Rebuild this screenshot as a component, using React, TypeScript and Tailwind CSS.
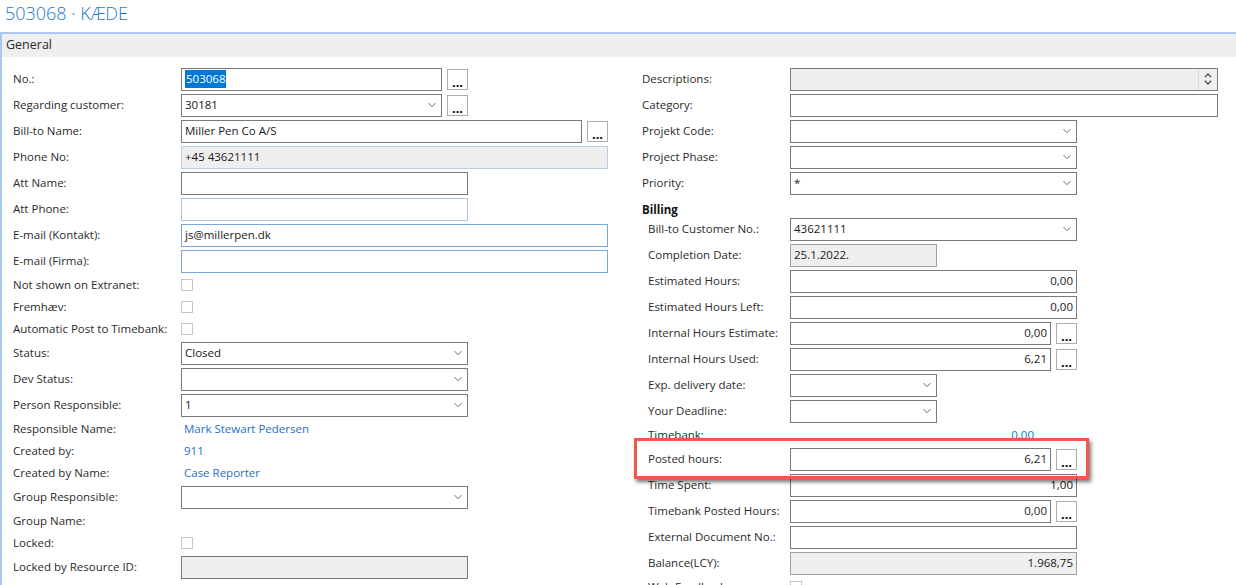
import type { ReactNode } from "react";

const font = { fontFamily: '"Open Sans", "Noto Sans", sans-serif' };

function Chevron() {
  return (
    <svg width="8" height="5" viewBox="0 0 8 5" className="absolute right-[5px] top-1/2 -translate-y-1/2">
      <polyline points="0.5,0.6 4,4.2 7.5,0.6" fill="none" stroke="#6a6a6a" strokeWidth="1" />
    </svg>
  );
}

function Dots() {
  return (
    <div className="ml-[5px] flex h-[21px] w-[21px] shrink-0 items-end justify-center border border-[#adadad] bg-white pb-[2px] text-[13px] font-bold leading-[10px] text-black">
      ...
    </div>
  );
}

type FieldProps = {
  w: string;
  value?: ReactNode;
  tone?: "normal" | "gray" | "grayBlue" | "blue" | "lightBlue" | "grayLight";
  select?: boolean;
  right?: boolean;
  dots?: boolean;
};

function Field({ w, value, tone = "normal", select, right, dots }: FieldProps) {
  const toneClass = {
    normal: "border-[#7a7a7a] bg-white",
    gray: "border-[#7a7a7a] bg-[#efefef]",
    grayLight: "border-[#a0a0a0] bg-[#efefef]",
    grayBlue: "border-[#b7cfe6] bg-[#efefef]",
    blue: "border-[#7aa7d3] bg-white",
    lightBlue: "border-[#aac8e6] bg-white",
  }[tone];
  return (
    <div className="flex items-center">
      <div className={`relative flex h-[23px] items-center border px-[3px] text-[11.5px] text-[#1a1a1a] ${toneClass} ${w} ${right ? "justify-end" : ""}`}>
        {value}
        {select && <Chevron />}
      </div>
      {dots && <Dots />}
    </div>
  );
}

function Check() {
  return <div className="h-[12px] w-[12px] border border-[#c6c6c6] bg-white" />;
}

function Row({ label, lw, h = "h-[26px]", children }: { label: string; lw: string; h?: string; children?: ReactNode }) {
  return (
    <div className={`flex items-center ${h}`}>
      <div className={`${lw} shrink-0 text-[11.5px] text-[#2b2b2b]`}>{label}</div>
      {children}
    </div>
  );
}

function Link({ children, className = "" }: { children: ReactNode; className?: string }) {
  return <div className={`text-[11.5px] text-[#1f6fc9] ${className}`}>{children}</div>;
}

export default function App() {
  const L = "w-[168px]";
  const R = "w-[148px]";
  const S = "w-[142px]";
  return (
    <div className="relative h-[585px] overflow-hidden bg-white" style={font}>
      <div className="h-[32px] pl-[5px] text-[18px] font-light leading-[26px] text-[#1e78cd]">503068 · KÆDE</div>

      <div className="border-l-2 border-t-2 border-[#a8c8ef]">
        <div className="flex h-[23px] items-center bg-[#efefef] pl-[4px] text-[12.5px] text-[#2b2b2b]">General</div>

        <div className="flex pt-[9px]">
          {/* left column */}
          <div className="w-[640px] shrink-0 pl-[11px]">
            <Row label="No.:" lw={L}>
              <Field w="w-[261px]" dots value={<span className="bg-[#0078d7] px-[1px] text-white">503068</span>} />
            </Row>
            <Row label="Regarding customer:" lw={L}>
              <Field w="w-[261px]" select dots value="30181" />
            </Row>
            <Row label="Bill-to Name:" lw={L}>
              <Field w="w-[401px]" dots value="Miller Pen Co A/S" />
            </Row>
            <Row label="Phone No:" lw={L}>
              <Field w="w-[427px]" tone="grayBlue" value="+45 43621111" />
            </Row>
            <Row label="Att Name:" lw={L}>
              <Field w="w-[287px]" />
            </Row>
            <Row label="Att Phone:" lw={L}>
              <Field w="w-[287px]" tone="lightBlue" />
            </Row>
            <Row label="E-mail (Kontakt):" lw={L}>
              <Field w="w-[427px]" tone="blue" value="js@millerpen.dk" />
            </Row>
            <Row label="E-mail (Firma):" lw={L}>
              <Field w="w-[427px]" tone="blue" />
            </Row>
            <Row label="Not shown on Extranet:" lw={L} h="h-[22px]">
              <Check />
            </Row>
            <Row label="Fremhæv:" lw={L} h="h-[22px]">
              <Check />
            </Row>
            <Row label="Automatic Post to Timebank:" lw={L} h="h-[22px]">
              <Check />
            </Row>
            <Row label="Status:" lw={L}>
              <Field w="w-[287px]" select value="Closed" />
            </Row>
            <Row label="Dev Status:" lw={L}>
              <Field w="w-[287px]" select />
            </Row>
            <Row label="Person Responsible:" lw={L}>
              <Field w="w-[287px]" select value="1" />
            </Row>
            <Row label="Responsible Name:" lw={L} h="h-[22px]">
              <Link className="pl-[3px]">Mark Stewart Pedersen</Link>
            </Row>
            <Row label="Created by:" lw={L} h="h-[22px]">
              <Link className="pl-[3px]">911</Link>
            </Row>
            <Row label="Created by Name:" lw={L} h="h-[22px]">
              <Link className="pl-[3px]">Case Reporter</Link>
            </Row>
            <Row label="Group Responsible:" lw={L}>
              <Field w="w-[287px]" select />
            </Row>
            <Row label="Group Name:" lw={L} h="h-[22px]" />
            <Row label="Locked:" lw={L} h="h-[22px]">
              <Check />
            </Row>
            <Row label="Locked by Resource ID:" lw={L}>
              <Field w="w-[287px]" tone="gray" />
            </Row>
          </div>

          {/* right column */}
          <div className="flex-1">
            <Row label="Descriptions:" lw={R}>
              <div className="relative flex h-[23px] w-[428px] items-center border border-[#7a7a7a] bg-[#efefef]">
                <div className="absolute right-0 top-0 flex h-full w-[19px] flex-col items-center justify-center gap-[2px] border-l border-[#dcdcdc]">
                  <svg width="8" height="5" viewBox="0 0 8 5">
                    <polyline points="0.8,4.2 4,1 7.2,4.2" fill="none" stroke="#505050" strokeWidth="1.3" />
                  </svg>
                  <svg width="8" height="5" viewBox="0 0 8 5">
                    <polyline points="0.8,0.8 4,4 7.2,0.8" fill="none" stroke="#505050" strokeWidth="1.3" />
                  </svg>
                </div>
              </div>
            </Row>
            <Row label="Category:" lw={R}>
              <Field w="w-[428px]" />
            </Row>
            <Row label="Projekt Code:" lw={R}>
              <Field w="w-[287px]" select />
            </Row>
            <Row label="Project Phase:" lw={R}>
              <Field w="w-[287px]" select />
            </Row>
            <Row label="Priority:" lw={R}>
              <Field w="w-[287px]" select value="*" />
            </Row>
            <div className="flex h-[20px] items-end text-[11.5px] font-bold leading-[12px] text-[#111]">Billing</div>
            <div className="pl-[6px]">
              <Row label="Bill-to Customer No.:" lw={S}>
                <Field w="w-[287px]" select value="43621111" />
              </Row>
              <Row label="Completion Date:" lw={S}>
                <Field w="w-[147px]" tone="grayLight" value="25.1.2022." />
              </Row>
              <Row label="Estimated Hours:" lw={S}>
                <Field w="w-[287px]" right value="0,00" />
              </Row>
              <Row label="Estimated Hours Left:" lw={S}>
                <Field w="w-[287px]" right value="0,00" />
              </Row>
              <Row label="Internal Hours Estimate:" lw={S}>
                <Field w="w-[261px]" right dots value="0,00" />
              </Row>
              <Row label="Internal Hours Used:" lw={S}>
                <Field w="w-[261px]" right dots value="6,21" />
              </Row>
              <Row label="Exp. delivery date:" lw={S}>
                <Field w="w-[147px]" select />
              </Row>
              <Row label="Your Deadline:" lw={S}>
                <Field w="w-[147px]" select />
              </Row>
              <Row label="Timebank:" lw={S} h="h-[22px]">
                <Link className="w-[244px] text-right">0,00</Link>
              </Row>
              <Row label="Posted hours:" lw={S}>
                <Field w="w-[261px]" right dots value="6,21" />
              </Row>
              <Row label="Time Spent:" lw={S}>
                <Field w="w-[287px]" right value="1,00" />
              </Row>
              <Row label="Timebank Posted Hours:" lw={S}>
                <Field w="w-[261px]" right dots value="0,00" />
              </Row>
              <Row label="External Document No.:" lw={S}>
                <Field w="w-[287px]" />
              </Row>
              <Row label="Balance(LCY):" lw={S}>
                <Field w="w-[287px]" tone="grayLight" right value="1.968,75" />
              </Row>
              <Row label="Web Feedback:" lw={S} h="h-[22px]">
                <Check />
              </Row>
            </div>
          </div>
        </div>
      </div>

      {/* annotation highlight */}
      <div className="pointer-events-none absolute left-[634px] top-[438px] h-[41px] w-[455px] border-[3px] border-[#f0574a] shadow-[2px_3px_4px_rgba(0,0,0,0.55)]" />
    </div>
  );
}
